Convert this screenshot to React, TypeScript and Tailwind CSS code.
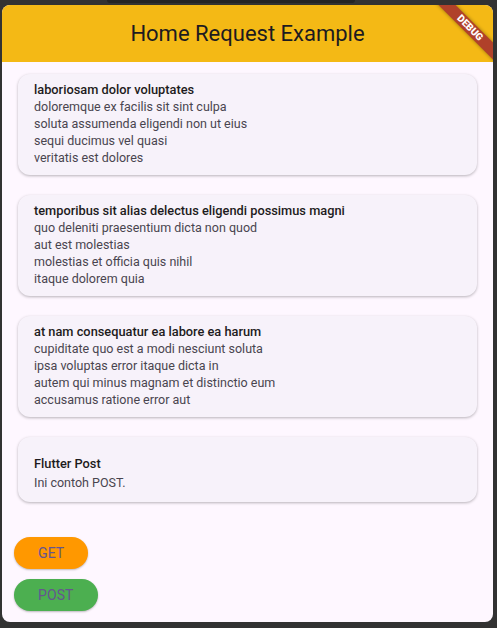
import React from "react";

const posts = [
  {
    title: "laboriosam dolor voluptates",
    body: [
      "doloremque ex facilis sit sint culpa",
      "soluta assumenda eligendi non ut eius",
      "sequi ducimus vel quasi",
      "veritatis est dolores",
    ],
  },
  {
    title: "temporibus sit alias delectus eligendi possimus magni",
    body: [
      "quo deleniti praesentium dicta non quod",
      "aut est molestias",
      "molestias et officia quis nihil",
      "itaque dolorem quia",
    ],
  },
  {
    title: "at nam consequatur ea labore ea harum",
    body: [
      "cupiditate quo est a modi nesciunt soluta",
      "ipsa voluptas error itaque dicta in",
      "autem qui minus magnam et distinctio eum",
      "accusamus ratione error aut",
    ],
  },
];

export default function App() {
  return (
    <div className="relative w-[497px] h-[628px] bg-[#323232] pt-[5px] pl-[2px] pr-[4px] pb-[6px] font-['Roboto',sans-serif] overflow-hidden">
      <div className="absolute left-[107px] top-0 w-[248px] h-[3px] rounded-b-[3px] bg-[#242424]" />
      <div className="relative flex flex-col h-full rounded-[8px] overflow-hidden bg-[#fef7ff]">
        <div className="h-[57px] shrink-0 bg-[#f4b915] flex items-center justify-center">
          <span className="text-[22px] leading-[28px] text-[#1d1b20]">Home Request Example</span>
        </div>
        <div className="flex flex-col gap-[20px] px-[16px] pt-[12px]">
          {posts.map((p, i) => (
            <div
              key={i}
              className="rounded-[12px] bg-[#f7f2fa] shadow-[0_1px_3px_rgba(0,0,0,0.28)] pl-[16px] pr-[16px] pt-[7px] pb-[9px]"
            >
              <div className="text-[12.8px] leading-[17px] font-medium text-[#1d1b20]">{p.title}</div>
              {p.body.map((l, j) => (
                <div key={j} className="text-[12.5px] leading-[17px] text-[#49454f]">
                  {l}
                </div>
              ))}
            </div>
          ))}
          <div className="rounded-[12px] bg-[#f7f2fa] shadow-[0_1px_3px_rgba(0,0,0,0.28)] px-[16px] pt-[18px] pb-[11px]">
            <div className="text-[12.8px] leading-[17px] font-medium text-[#1d1b20]">Flutter Post</div>
            <div className="mt-[2px] text-[12.5px] leading-[17px] text-[#49454f]">Ini contoh POST.</div>
          </div>
        </div>
        <div className="flex-1" />
        <div className="flex flex-col items-start gap-[10px] pl-[12px] pb-[11px]">
          <button className="h-[32px] px-[24px] rounded-full bg-[#ff9800] text-[14px] font-normal tracking-[0.1px] text-[#65558f] shadow-[0_1px_2px_rgba(0,0,0,0.25)]">
            GET
          </button>
          <button className="h-[32px] px-[24px] rounded-full bg-[#4caf50] text-[14px] font-normal tracking-[0.1px] text-[#65558f] shadow-[0_1px_2px_rgba(0,0,0,0.25)]">
            POST
          </button>
        </div>
        <div className="absolute left-[408px] top-[17px] w-[120px] h-[12px] rotate-45 bg-[#b0412a] shadow-[0_0_4px_rgba(0,0,0,0.4)] flex items-center justify-center">
          <span className="text-[10px] leading-[10px] font-black text-white tracking-[0px]">DEBUG</span>
        </div>
      </div>
    </div>
  );
}
